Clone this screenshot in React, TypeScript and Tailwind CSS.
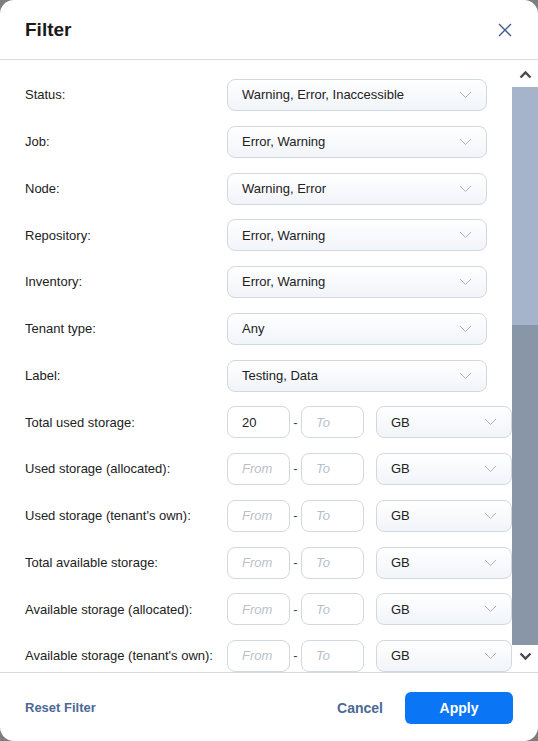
import React from "react";

const font = { fontFamily: '"Liberation Sans", Arial, sans-serif' };

function Chevron() {
  return (
    <svg width="13" height="8" viewBox="0 0 13 8" className="shrink-0">
      <path d="M1 1l5.5 5.5L12 1" fill="none" stroke="#adb4bf" strokeWidth="1" />
    </svg>
  );
}

function Select({ value, wide = true }: { value: string; wide?: boolean }) {
  return (
    <div
      className={`flex h-[32px] shrink-0 items-center justify-between rounded-[8px] border border-[#d3d8df] bg-gradient-to-b from-white to-[#f1f4f9] pl-[14px] pr-[14px] ${
        wide ? "w-[260px]" : "w-[136px]"
      }`}
    >
      <span className="text-[13px] text-[#222]">{value}</span>
      <Chevron />
    </div>
  );
}

function NumInput({ value, placeholder }: { value?: string; placeholder: string }) {
  return (
    <div className="flex h-[32px] w-[63px] shrink-0 items-center rounded-[8px] border border-[#d3d8df] bg-white pl-[14px]">
      {value ? (
        <span className="text-[13px] text-[#222]">{value}</span>
      ) : (
        <span className="text-[13px] italic text-[#b9bfc8]">{placeholder}</span>
      )}
    </div>
  );
}

const selectRows = [
  ["Status:", "Warning, Error, Inaccessible"],
  ["Job:", "Error, Warning"],
  ["Node:", "Warning, Error"],
  ["Repository:", "Error, Warning"],
  ["Inventory:", "Error, Warning"],
  ["Tenant type:", "Any"],
  ["Label:", "Testing, Data"],
];

const storageRows: [string, string?][] = [
  ["Total used storage:", "20"],
  ["Used storage (allocated):"],
  ["Used storage (tenant's own):"],
  ["Total available storage:"],
  ["Available storage (allocated):"],
  ["Available storage (tenant's own):"],
];

function Label({ text }: { text: string }) {
  return <div className="w-[202px] shrink-0 text-[13px] text-[#222]">{text}</div>;
}

function Scrollbar() {
  return (
    <div className="flex w-[26px] shrink-0 flex-col items-center">
      <div className="flex h-[27px] items-center justify-center pt-[2px]">
        <svg width="13" height="9" viewBox="0 0 13 9">
          <path d="M1.5 7.5l5-5 5 5" fill="none" stroke="#4a4a4a" strokeWidth="2.4" />
        </svg>
      </div>
      <div className="h-[238px] w-full bg-[#a6b4cb]" />
      <div className="h-[320px] w-full bg-[#8896a8]" />
      <div className="flex flex-1 items-center justify-center pb-[4px]">
        <svg width="13" height="9" viewBox="0 0 13 9">
          <path d="M1.5 1.5l5 5 5-5" fill="none" stroke="#4a4a4a" strokeWidth="2.4" />
        </svg>
      </div>
    </div>
  );
}

export default function App() {
  return (
    <div className="h-[741px] w-[538px] bg-[#7d7d7d]" style={font}>
      <div className="flex h-full w-full flex-col overflow-hidden rounded-[14px] bg-white">
        <div className="flex h-[60px] shrink-0 items-center justify-between border-b border-[#d6dae0] pl-[25px] pr-[26px] pt-[1px]">
          <h1 className="text-[19px] font-bold text-[#1a1a1a]">Filter</h1>
          <svg width="14" height="14" viewBox="0 0 14 14">
            <path d="M1 1l12 12M13 1L1 13" stroke="#3f5d8c" strokeWidth="1.4" />
          </svg>
        </div>
        <div className="flex h-[613px] shrink-0 border-b border-[#d6dae0]">
          <div className="flex flex-1 flex-col gap-[14.75px] overflow-hidden pl-[25px] pt-[19px]">
            {selectRows.map(([label, value]) => (
              <div key={label} className="flex items-center">
                <Label text={label} />
                <Select value={value} />
              </div>
            ))}
            {storageRows.map(([label, value]) => (
              <div key={label} className="flex items-center">
                <Label text={label} />
                <NumInput value={value} placeholder="From" />
                <span className="w-[11px] shrink-0 text-center text-[13px] text-[#444]">-</span>
                <NumInput placeholder="To" />
                <div className="ml-[12px]">
                  <Select value="GB" wide={false} />
                </div>
              </div>
            ))}
          </div>
          <Scrollbar />
        </div>
        <div className="flex flex-1 items-center justify-between pl-[25px] pr-[25px] pt-[2px]">
          <button className="text-[13px] font-bold text-[#4b6996]">Reset Filter</button>
          <div className="flex items-center gap-[22px]">
            <button className="text-[14px] font-bold text-[#4b6996]">Cancel</button>
            <button className="h-[32px] w-[108px] rounded-[6px] bg-[#0a76f6] text-[14px] font-bold text-white">
              Apply
            </button>
          </div>
        </div>
      </div>
    </div>
  );
}
